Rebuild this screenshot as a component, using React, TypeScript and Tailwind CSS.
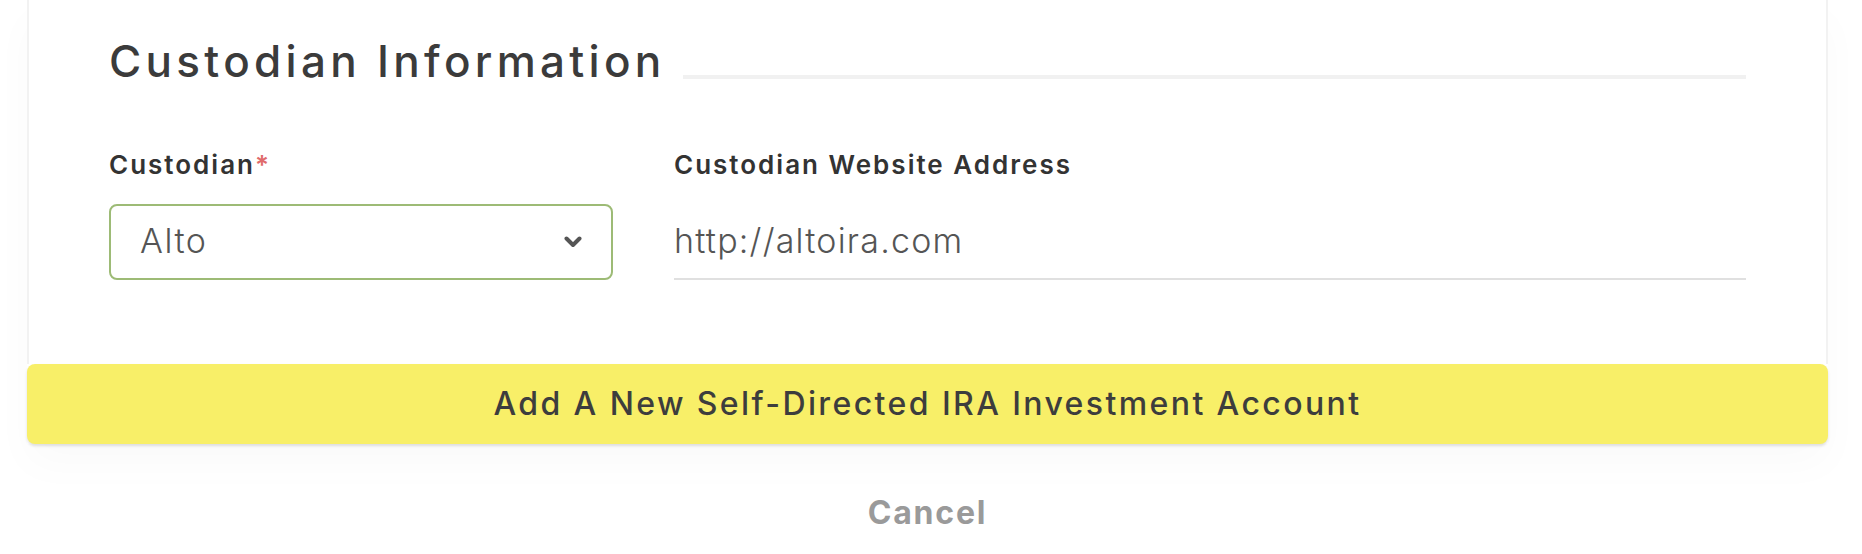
import React from "react";

const ChevronDown = () => (
  <svg width="18" height="12" viewBox="0 0 18 12" fill="none">
    <path d="M2.5 2.5L9 9L15.5 2.5" stroke="#555555" strokeWidth="4" strokeLinecap="round" strokeLinejoin="round" />
  </svg>
);

const App = () => {
  return (
    <div className="min-h-screen bg-white font-['Inter',sans-serif]">
      <div className="ml-[27px] w-[1801px] shadow-[0_20px_40px_rgba(0,0,0,0.025)]">
        <div className="border-x-2 border-[#f2f2f2] bg-white px-[80px] pt-[39px] pb-[84px]">
          <div className="flex items-end gap-[17px]">
            <h2 className="text-[44px] leading-[44px] font-medium tracking-[4.3px] text-[#3b3b3b] whitespace-nowrap">
              Custodian Information
            </h2>
            <div className="flex-1 h-[4px] mb-[4px] bg-[#f1f1f1]" />
          </div>

          <div className="mt-[69px] flex gap-[61px]">
            <div className="w-[504px]">
              <label className="block text-[26px] leading-[26px] font-semibold tracking-[2px] text-[#333333]">
                Custodian<span className="text-[#e06b6b]">*</span>
              </label>
              <div className="mt-[26px] h-[76px] flex items-center justify-between rounded-lg border-2 border-[#9dbb76] pl-[29px] pr-[29px]">
                <span className="text-[34px] font-light tracking-[1.5px] text-[#555555] pb-[4px]">Alto</span>
                <ChevronDown />
              </div>
            </div>

            <div className="flex-1">
              <label className="block text-[26px] leading-[26px] font-semibold tracking-[2px] text-[#333333]">
                Custodian Website Address
              </label>
              <div className="mt-[26px] h-[76px] flex items-center border-b-2 border-[#e0e0e0]">
                <span className="text-[34px] font-light tracking-[1.2px] text-[#555555] pb-[2px]">http://altoira.com</span>
              </div>
            </div>
          </div>
        </div>

        <button className="block w-full h-[80px] rounded-lg bg-[#f8ef68] shadow-[0_2px_3px_rgba(0,0,0,0.12)] text-[32px] font-medium tracking-[2.4px] text-[#3d3d3d]">
          Add A New Self-Directed IRA Investment Account
        </button>
      </div>

      <div className="ml-[27px] w-[1801px] mt-[53px] flex justify-center">
        <span className="text-[32px] leading-[32px] font-bold tracking-[1.8px] text-[#9a9a9a]">Cancel</span>
      </div>
    </div>
  );
};

export default App;
